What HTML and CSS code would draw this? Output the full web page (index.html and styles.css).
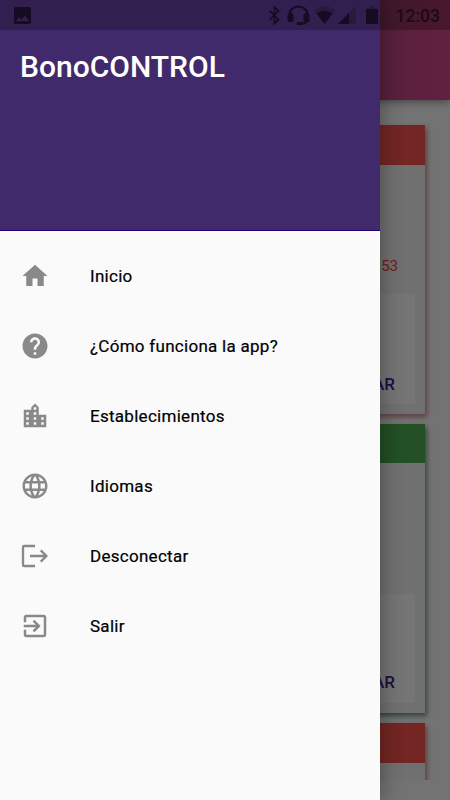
FILE: index.html
```html
<!DOCTYPE html>
<html lang="es">
<head>
<meta charset="utf-8">
<meta name="viewport" content="width=device-width">
<title>BonoCONTROL</title>
<link rel="stylesheet" href="styles.css">
</head>
<body>
<div class="screen">
  <div class="app">
    <header class="appbar"></header>
    <main class="cards">
      <article class="card card-red"><div class="card-head"></div><div class="card-body"><p class="card-date">53</p><div class="card-panel"><span class="card-action">VALIDAR</span></div></div></article>
      <article class="card card-green"><div class="card-head"></div><div class="card-body"><p class="card-date"></p><div class="card-panel"><span class="card-action">VALIDAR</span></div></div></article>
      <article class="card card-red"><div class="card-head"></div><div class="card-body"></div></article>
    </main>
  </div>
  <div class="scrim"></div>
  <aside class="drawer">
    <header class="drawer-head"><h1>BonoCONTROL</h1></header>
    <nav class="menu">
      <a class="item"><svg viewBox="0 0 24 24"><path d="M10 20v-6h4v6h5v-8h3L12 3 2 12h3v8z"/></svg><span>Inicio</span></a>
      <a class="item"><svg viewBox="0 0 24 24"><path d="M12 2C6.480 2 2 6.480 2 12s4.480 10 10 10 10-4.480 10-10S17.520 2 12 2zm1 17h-2v-2h2v2zm2.070-7.750l-.9.920C13.450 12.900 13 13.500 13 15h-2v-.5c0-1.100.45-2.100 1.170-2.830l1.240-1.260c.37-.36.59-.86.59-1.410 0-1.100-.9-2-2-2s-2 .9-2 2H8c0-2.210 1.790-4 4-4s4 1.790 4 4c0 .88-.36 1.680-.93 2.250z"/></svg><span>¿Cómo funciona la app?</span></a>
      <a class="item"><svg viewBox="0 0 24 24"><path d="M15 11V5l-3-3-3 3v2H3v14h18V11h-6zm-8 8H5v-2h2v2zm0-4H5v-2h2v2zm0-4H5V9h2v2zm6 8h-2v-2h2v2zm0-4h-2v-2h2v2zm0-4h-2V9h2v2zm0-4h-2V5h2v2zm6 12h-2v-2h2v2zm0-4h-2v-2h2v2z"/></svg><span>Establecimientos</span></a>
      <a class="item"><svg viewBox="0 0 24 24"><path d="M11.990 2C6.470 2 2 6.480 2 12s4.470 10 9.990 10C17.520 22 22 17.520 22 12S17.520 2 11.990 2zm6.930 6h-2.950c-.32-1.250-.78-2.450-1.380-3.560 1.840.63 3.370 1.910 4.330 3.560zM12 4.040c.83 1.200 1.480 2.530 1.910 3.960h-3.820c.43-1.430 1.080-2.760 1.910-3.960zM4.260 14C4.100 13.360 4 12.690 4 12s.1-1.360.26-2h3.380c-.08.66-.14 1.320-.14 2s.06 1.340.14 2H4.260zm.82 2h2.950c.32 1.250.78 2.450 1.380 3.560-1.840-.63-3.370-1.900-4.330-3.560zm2.950-8H5.080c.96-1.660 2.490-2.930 4.330-3.560C8.810 5.550 8.350 6.750 8.030 8zM12 19.960c-.83-1.200-1.480-2.530-1.910-3.960h3.820c-.43 1.430-1.080 2.760-1.910 3.960zM14.340 14H9.660c-.09-.66-.16-1.320-.16-2s.07-1.350.16-2h4.680c.09.65.16 1.320.16 2s-.07 1.340-.16 2zm.25 5.560c.6-1.110 1.060-2.310 1.380-3.560h2.950c-.96 1.650-2.490 2.930-4.330 3.560zM16.360 14c.08-.66.14-1.320.14-2s-.06-1.340-.14-2h3.380c.16.64.26 1.310.26 2s-.1 1.360-.26 2h-3.380z"/></svg><span>Idiomas</span></a>
      <a class="item"><svg viewBox="0 0 24 24" class="stroke"><path d="M12 4H3.300a.9.9 0 0 0-.9.900v14.200a.9.9 0 0 0 .9.900H12M8 12h13M16.600 7.500l4.500 4.500-4.500 4.500"/></svg><span>Desconectar</span></a>
      <a class="item"><svg viewBox="0 0 24 24"><path d="M10.090 15.590L11.500 17l5-5-5-5-1.410 1.410L12.670 11H3v2h9.670l-2.580 2.590zM19 3H5c-1.110 0-2 .9-2 2v4h2V5h14v14H5v-4H3v4c0 1.100.89 2 2 2h14c1.100 0 2-.9 2-2V5c0-1.100-.9-2-2-2z"/></svg><span>Salir</span></a>
    </nav>
  </aside>
  <div class="statusbar">
    <svg class="st-image" viewBox="0 0 18 18"><path fill-rule="evenodd" d="M18 16V2a2 2 0 0 0-2-2H2a2 2 0 0 0-2 2v14a2 2 0 0 0 2 2h14a2 2 0 0 0 2-2zM5.500 10.500L8 13.500l3.500-4.500L16 15H2z"/></svg>
    <svg class="st-system" viewBox="0 0 112 30">
      <path class="line" d="M1.500 10.500l9 9-4 4V7l4 4-9 9"/>
      <path class="headset" d="M21.500 15.500v-1a9 8 0 0 1 18 0v1M39.500 19c0 3-2 4.300-5.500 4.600"/>
      <rect x="19.500" y="13" width="6" height="9" rx="2.500"/><rect x="35.500" y="13" width="6" height="9" rx="2.500"/><rect x="28.500" y="22" width="6" height="3" rx="1.500"/>
      <path class="faint" d="M46 10.500C52 5 61 5 67.500 10.500L56.500 24z"/><path d="M48.500 13.500C53 10 60 10 64.500 13.500L56.500 24z"/>
      <path class="faint" d="M88 6v18H70z"/><path d="M81 13v11H70z"/>
      <path class="faint" d="M101.500 6h5v2.300h3.500V10H98V8.300h3.500z"/><path d="M98 9h12v15H98z"/>
    </svg>
    <span class="time">12:03</span>
  </div>
</div>
</body>
</html>
```
FILE: styles.css
```css
* { box-sizing: border-box; }
body { margin: 0; font-family: Roboto, sans-serif; }
.screen { position: relative; width: 450px; height: 800px; overflow: hidden; background: #fafafa; }
.app { height: 780px; overflow: hidden; }
.appbar { position: relative; height: 100px; background: linear-gradient(90deg, #512da8 0%, #bd4680 84%, #d5488c 100%); box-shadow: 0 2px 8px rgba(0, 0, 0, .4); }
.cards { display: flex; flex-direction: column; gap: 10px; padding: 25px 25px 0; }
.card { flex: none; height: 289px; background: #f3f3f3; }
.card-red { box-shadow: 2px 3px 5px #c98a8e; }
.card-green { box-shadow: 2px 3px 5px #709078; }
.card-head { height: 40px; background: #fb5350; }
.card-body { padding: 91px 10px 0; }
.card-date { margin: 0; height: 38px; padding-right: 17px; text-align: right; font-size: 15px; line-height: 20px; color: #f44336; }
.card-panel { display: flex; align-items: flex-end; justify-content: flex-end; height: 110px; padding: 0 20px 9px; background: #fff; }
.card-green .card-head { height: 39px; background: #4caf50; }
.card-green .card-body { padding-top: 93px; }
.card-green .card-panel { height: 109px; padding-bottom: 10px; }
.card-action { font-size: 17px; line-height: 22px; font-weight: 500; color: #4a208b; }
.scrim { position: absolute; inset: 0; background: rgba(0, 0, 0, .54); }
.drawer { position: absolute; top: 0; bottom: 0; left: 0; width: 380px; background: #fafafa; box-shadow: 2px 0 20px rgba(0, 0, 0, .32); }
.drawer-head { height: 231px; padding: 49px 20px 0; background: #412a6b; border-bottom: 1px solid #22006f; }
.drawer-head h1 { margin: 0; color: #fff; font-size: 30px; line-height: 36px; font-weight: 500; }
.menu { padding-top: 10px; }
.item { display: flex; align-items: center; height: 70px; padding-left: 20px; gap: 40px; color: #000; font-size: 17px; line-height: 24px; font-weight: 400; letter-spacing: .28px; -webkit-text-stroke: .2px #000; }
.item svg { width: 30px; height: 30px; fill: #898989; }
.item svg.stroke { fill: none; stroke: #898989; stroke-width: 1.9; }
.statusbar { position: absolute; top: 0; left: 0; right: 0; display: flex; align-items: center; height: 30px; padding: 0 10px 0 14px; background: rgba(0, 0, 0, .26); }
.st-image { width: 17px; height: 17px; fill: #150b23; }
.st-system { width: 112px; height: 30px; margin-left: auto; fill: #150b23; }
.st-system .line { fill: none; stroke: #150b23; stroke-width: 1.7; }
.st-system .headset { fill: none; stroke: #150b23; stroke-width: 2.2; }
.st-system .faint { fill: #261a40; }
.time { width: 46px; margin-left: 14px; padding-top: 2px; color: #1d0a14; font-size: 17.5px; line-height: 24px; font-weight: 500; text-align: right; white-space: nowrap; }
```
